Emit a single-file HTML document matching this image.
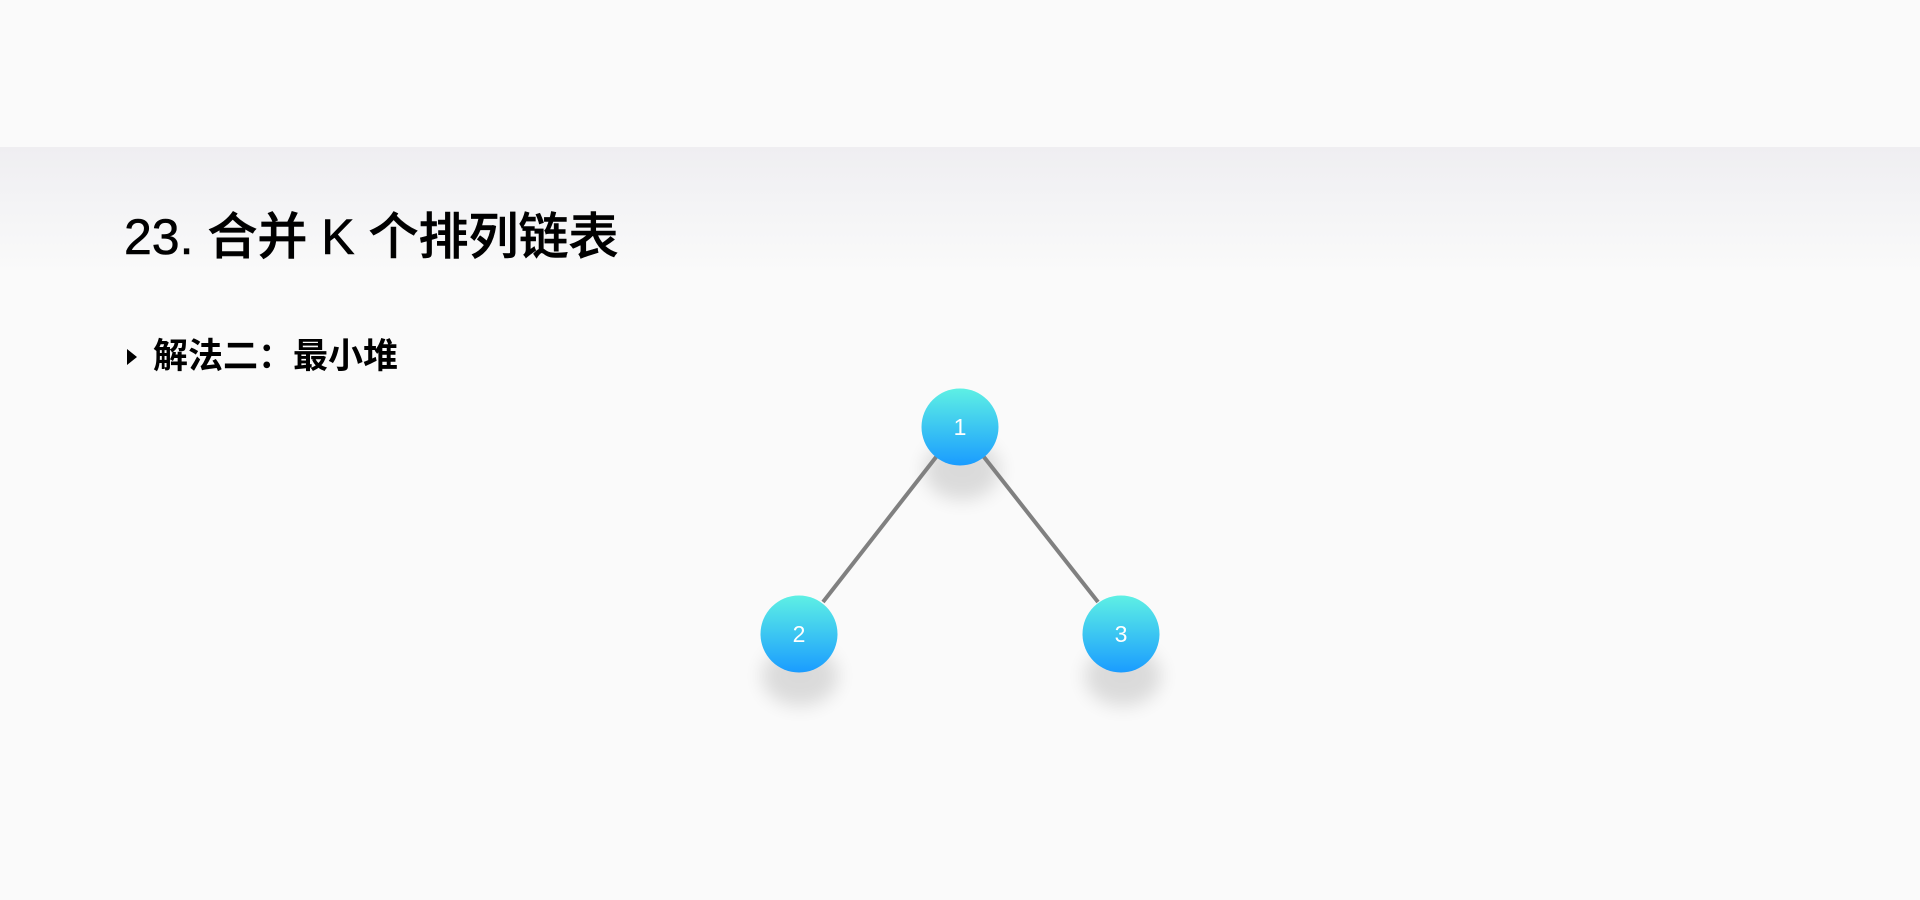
<!DOCTYPE html>
<html><head><meta charset="utf-8"><style>
html,body{margin:0;padding:0;width:1920px;height:900px;overflow:hidden;background:#fafafa;font-family:"Liberation Sans","Noto Sans CJK SC",sans-serif;}
.band{position:absolute;left:0;top:147px;width:1920px;height:126px;background:linear-gradient(#efeef1 0%,#f3f3f5 40%,#fafafa 100%);}
.title{position:absolute;left:124px;top:207px;font-size:50px;line-height:60px;color:#000;font-weight:500;white-space:nowrap;-webkit-text-stroke:0.6px #000;}
.sub{position:absolute;left:127px;top:337px;font-size:35px;line-height:40px;font-weight:bold;color:#000;white-space:nowrap;}
.tri{display:inline-block;width:0;height:0;border-top:8px solid transparent;border-bottom:8px solid transparent;border-left:10px solid #000;margin-right:16px;vertical-align:3px;}
</style></head><body>
<div class="band"></div>
<div class="title">23. 合并 K 个排列链表</div>
<div class="sub"><span class="tri"></span>解法二：最小堆</div>
<svg width="1920" height="900" style="position:absolute;left:0;top:0">
<defs>
<linearGradient id="g" x1="0" y1="0" x2="0" y2="1"><stop offset="0" stop-color="#5ef0e4"/><stop offset="1" stop-color="#1a9cff"/></linearGradient>
<filter id="s" x="-50%" y="-50%" width="200%" height="200%"><feGaussianBlur stdDeviation="9"/></filter>
</defs>
<ellipse cx="962" cy="470" rx="38" ry="30" fill="#000" opacity="0.12" filter="url(#s)"/>
<ellipse cx="800" cy="676" rx="38" ry="30" fill="#000" opacity="0.12" filter="url(#s)"/>
<ellipse cx="1123" cy="676" rx="38" ry="30" fill="#000" opacity="0.12" filter="url(#s)"/>
<line x1="940" y1="452" x2="823" y2="602" stroke="#808080" stroke-width="4"/>
<line x1="980" y1="452" x2="1098" y2="602" stroke="#808080" stroke-width="4"/>
<circle cx="960" cy="427" r="38.5" fill="url(#g)"/>
<circle cx="799" cy="634" r="38.5" fill="url(#g)"/>
<circle cx="1121" cy="634" r="38.5" fill="url(#g)"/>
<g fill="#fff" font-family="Liberation Sans,sans-serif" font-size="23" text-anchor="middle">
<text x="960" y="435">1</text><text x="799" y="642">2</text><text x="1121" y="642">3</text>
</g>
</svg>
</body></html>
